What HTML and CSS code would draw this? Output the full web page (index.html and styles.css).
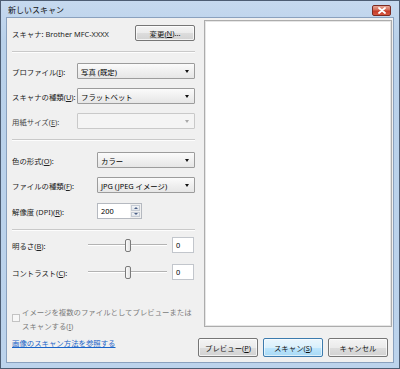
FILE: index.html
```html
<!DOCTYPE html>
<html lang="ja">
<head>
<meta charset="utf-8">
<title>新しいスキャン</title>
<link rel="stylesheet" href="styles.css">
</head>
<body>
<div class="window">
  <div class="titlebar">
    <span class="title">新しいスキャン</span>
    <span class="close"><svg width="8" height="7" viewBox="0 0 8 7"><path d="M1 1 L7 6 M7 1 L1 6" stroke="#fff" stroke-width="1.8" stroke-linecap="round"/></svg></span>
  </div>
  <div class="client">
    <div class="left">
      <div class="row r1">
        <span class="label grow">スキャナ: Brother MFC-XXXX</span>
        <span class="btn btn-change">変更(<u>N</u>)...</span>
      </div>
      <div class="sep s1"></div>
      <div class="row r2">
        <span class="label w65">プロファイル(<u>I</u>):</span>
        <span class="combo">写真 (既定)<i class="arrow"></i></span>
      </div>
      <div class="row r3">
        <span class="label w65">スキャナの種類(<u>U</u>):</span>
        <span class="combo">フラットベット<i class="arrow"></i></span>
      </div>
      <div class="row r3">
        <span class="label w65 dim">用紙サイズ(<u>E</u>):</span>
        <span class="combo disabled"><i class="arrow"></i></span>
      </div>
      <div class="sep s2"></div>
      <div class="row r4">
        <span class="label w85">色の形式(<u>O</u>):</span>
        <span class="combo">カラー<i class="arrow"></i></span>
      </div>
      <div class="row r3">
        <span class="label w85">ファイルの種類(<u>F</u>):</span>
        <span class="combo">JPG (JPEG イメージ)<i class="arrow"></i></span>
      </div>
      <div class="row r5">
        <span class="label w85">解像度 (DPI)(<u>R</u>):</span>
        <span class="spin"><span class="spin-text">200</span><span class="spin-btns"><span class="sb up"></span><span class="sb down"></span></span></span>
      </div>
      <div class="sep s2"></div>
      <div class="row r6">
        <span class="label w76">明るさ(<u>B</u>):</span>
        <span class="slider"><i class="thumb"></i></span>
        <span class="tbox">0</span>
      </div>
      <div class="row r7">
        <span class="label w76">コントラスト(<u>C</u>):</span>
        <span class="slider"><i class="thumb"></i></span>
        <span class="tbox">0</span>
      </div>
      <div class="check">
        <span class="cbox"></span>
        <span class="ctext">イメージを複数のファイルとしてプレビューまたは<br>スキャンする(<u>I</u>)</span>
      </div>
      <a class="link" href="#">画像のスキャン方法を参照する</a>
    </div>
    <div class="right">
      <div class="preview"></div>
      <div class="buttons">
        <span class="btn bb">プレビュー(<u>P</u>)</span>
        <span class="btn bb default">スキャン(<u>S</u>)</span>
        <span class="btn bb">キャンセル</span>
      </div>
    </div>
  </div>
</div>
</body>
</html>
```

FILE: styles.css
```css
* { box-sizing: border-box; }
html, body { margin: 0; padding: 0; }
body {
  width: 400px;
  height: 369px;
  overflow: hidden;
  font-family: "Noto Sans", "Noto Sans CJK JP", sans-serif;
  font-size: 7.4px;
  color: #1e1e1e;
}
u { text-decoration: underline; }

.window {
  width: 400px;
  height: 369px;
  border: 1px solid #4d5d73;
  background: linear-gradient(#c6d9ef, #b9d1ea 40px, #bcd3ec);
  padding: 0 5px 5px 5px;
  display: flex;
  flex-direction: column;
}

.titlebar {
  height: 16px;
  display: flex;
  align-items: flex-start;
  padding: 0 3px 0 2px;
}
.title {
  line-height: 16px;
  color: #111;
  font-size: 8px;
  padding-top: 1px;
}
.close {
  margin-left: auto;
  margin-top: 4px;
  width: 19px;
  height: 11px;
  border: 1px solid #7b2b22;
  border-radius: 2px;
  background: linear-gradient(#e8a796, #d46a55 45%, #c33a28 55%, #d6563f);
  display: flex;
  align-items: center;
  justify-content: center;
}
.close svg { display: block; }

.client {
  height: 346px;
  border: 1px solid #8aa1be;
  background: #f0f0f0;
  display: flex;
}

.left {
  width: 190px;
  padding: 0 2px 0 5px;
  display: flex;
  flex-direction: column;
}

.row {
  display: flex;
  align-items: center;
  height: 16px;
}
.r1 { margin-top: 7px; }
.r2 { margin-top: 10px; }
.r3 { margin-top: 9px; }
.r4 { margin-top: 11px; }
.r5 { margin-top: 10px; }
.r6 { margin-top: 6px; }
.r7 { margin-top: 11px; }

.label { white-space: nowrap; color: #222; }
.grow { flex: 1; }
.w65 { width: 65px; flex: none; }
.w85 { width: 85px; flex: none; }
.w76 { width: 76px; flex: none; }
.dim { color: #444; }

.sep {
  height: 2px;
  border-top: 1px solid #c9c9c9;
  border-bottom: 1px solid #fdfdfd;
}
.s1 { margin-top: 10px; }
.s2 { margin-top: 10px; }

.btn {
  display: flex;
  align-items: center;
  justify-content: center;
  border: 1px solid #767676;
  border-radius: 2px;
  background: linear-gradient(#f4f4f4, #ebebeb 50%, #dddddd 51%, #d2d2d2);
  box-shadow: inset 0 0 0 1px rgba(255,255,255,0.7);
  color: #111;
  white-space: nowrap;
}
.btn-change {
  width: 60px;
  height: 16px;
}

.combo {
  flex: 1;
  height: 16px;
  border: 1px solid #9c9c9c;
  border-radius: 1px;
  background: linear-gradient(#fbfbfb, #f0f0f0 50%, #e6e6e6);
  display: flex;
  align-items: center;
  padding-left: 3px;
  color: #000;
  white-space: nowrap;
}
.arrow {
  margin-left: auto;
  margin-right: 5px;
  width: 0;
  height: 0;
  border-left: 2.5px solid transparent;
  border-right: 2.5px solid transparent;
  border-top: 3px solid #111;
}
.combo.disabled {
  border-color: #c9c9c9;
  background: #f4f4f4;
}
.combo.disabled .arrow { border-top-color: #a8a8a8; }

.spin {
  width: 45px;
  height: 16px;
  display: flex;
  border: 1px solid #b5b9c0;
  background: #fff;
}
.spin-text {
  flex: 1;
  padding-left: 3px;
  line-height: 14px;
  color: #000;
}
.spin-btns {
  width: 11px;
  display: flex;
  flex-direction: column;
  gap: 1px;
  padding: 1px;
  background: #f0f0f0;
}
.sb {
  flex: 1;
  border: 1px solid #c5cbd4;
  background: linear-gradient(#f2f4f7, #e0e4ea);
  display: flex;
  align-items: center;
  justify-content: center;
}
.sb::after {
  content: "";
  width: 0;
  height: 0;
  border-left: 2px solid transparent;
  border-right: 2px solid transparent;
}
.sb.up::after { border-bottom: 2px solid #4a5f86; }
.sb.down::after { border-top: 2px solid #4a5f86; }

.slider {
  width: 79px;
  height: 16px;
  display: flex;
  align-items: center;
  justify-content: center;
  background: linear-gradient(transparent 7px, #b3b3b3 7px, #b3b3b3 8px, #ffffff 8px, #ffffff 9px, transparent 9px);
}
.thumb {
  display: block;
  width: 6px;
  height: 13px;
  border: 1px solid #7a7a7a;
  border-radius: 2px;
  background: linear-gradient(90deg, #fafafa, #e3e3e3);
}
.tbox {
  margin-left: 5px;
  width: 22px;
  height: 16px;
  border: 1px solid #c2c6cc;
  background: #fff;
  padding-left: 3px;
  line-height: 14px;
  color: #000;
}

.check {
  margin-top: 25px;
  display: flex;
  align-items: flex-start;
}
.cbox {
  width: 8px;
  height: 8px;
  margin-top: 9px;
  border: 1px solid #c3c3c3;
  background: #f7f7f7;
  flex: none;
}
.ctext {
  margin-left: 2px;
  line-height: 14px;
  color: #7a7a7a;
  white-space: nowrap;
}

.link {
  margin-top: 3px;
  line-height: 14px;
  color: #1a64c8;
  text-decoration: underline;
  white-space: nowrap;
  align-self: flex-start;
}

.right {
  flex: 1;
  display: flex;
  flex-direction: column;
}
.preview {
  margin: 2px 1px 0 7px;
  height: 307px;
  border: 1px solid #acacac;
  background: #fff;
  box-shadow: inset 0 0 0 1px #e6e6e6;
}
.buttons {
  margin-top: 11px;
  display: flex;
  justify-content: flex-end;
  gap: 5px;
  padding-right: 5px;
}
.bb {
  width: 60px;
  height: 19px;
}
.bb.default {
  border-color: #3d7bad;
  background: linear-gradient(#eaf6fd, #d9f0fc 50%, #bee6fd 51%, #a7d9f5);
  box-shadow: inset 0 0 0 1px rgba(255,255,255,0.6);
}
```
